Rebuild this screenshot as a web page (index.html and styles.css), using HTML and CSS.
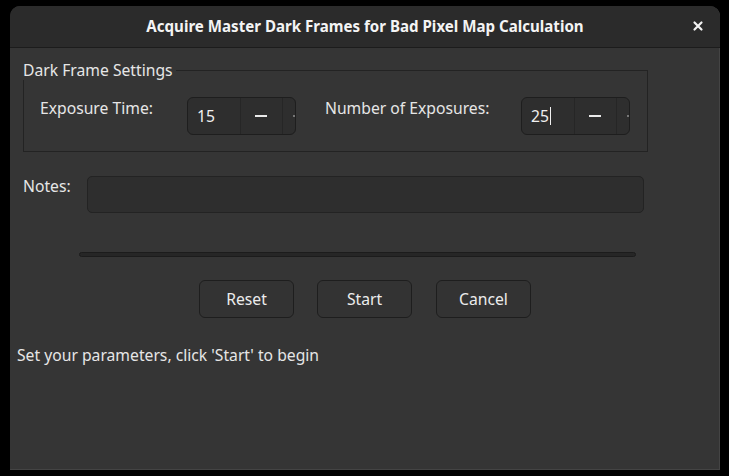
FILE: index.html
```html
<!DOCTYPE html>
<html>
<head>
<meta charset="utf-8">
<link rel="stylesheet" href="styles.css">
</head>
<body>
<div class="window">
  <div class="titlebar">
    <div class="title">Acquire Master Dark Frames for Bad Pixel Map Calculation</div>
    <div class="close">
      <svg width="12" height="12" viewBox="0 0 12 12"><path d="M2.5 2.5 L9.5 9.5 M9.5 2.5 L2.5 9.5" stroke="#f2f2f2" stroke-width="2.2" stroke-linecap="round"/></svg>
    </div>
  </div>
  <div class="content">
    <div class="frame">
      <div class="frame-label">Dark Frame Settings</div>
      <div class="frame-row">
        <div class="lbl lbl1">Exposure Time:</div>
        <div class="spin">
          <div class="spin-entry">15</div>
          <div class="spin-btn"><span class="minus"></span></div>
          <div class="spin-btn cut"><span class="dot"></span></div>
        </div>
        <div class="lbl lbl2">Number of Exposures:</div>
        <div class="spin">
          <div class="spin-entry">25<span class="caret"></span></div>
          <div class="spin-btn"><span class="minus"></span></div>
          <div class="spin-btn cut"><span class="dot"></span></div>
        </div>
      </div>
    </div>
    <div class="notes-row">
      <div class="lbl notes-lbl">Notes:</div>
      <div class="entry"></div>
    </div>
    <div class="progress"></div>
    <div class="buttons">
      <div class="btn">Reset</div>
      <div class="btn">Start</div>
      <div class="btn">Cancel</div>
    </div>
    <div class="status">Set your parameters, click 'Start' to begin</div>
  </div>
</div>
</body>
</html>
```

FILE: styles.css
```css
html, body {
  margin: 0;
  padding: 0;
  background: #000;
  width: 729px;
  height: 476px;
  overflow: hidden;
}
body {
  font-family: "Noto Sans", "Open Sans", sans-serif;
  font-size: 15.7px;
  color: #e6e6e6;
}
.window {
  margin: 6px 0 0 10px;
  width: 710px;
  height: 464px;
  background: #353535;
  border-radius: 10px 10px 0 0;
  box-shadow: inset -1px -1px 0 #444;
  display: flex;
  flex-direction: column;
  overflow: hidden;
}
.titlebar {
  height: 41px;
  flex: none;
  background: #2b2b2b;
  border-bottom: 1px solid #1c1c1c;
  display: flex;
  align-items: center;
  justify-content: center;
  position: relative;
}
.title {
  font-weight: bold;
  font-size: 15.1px;
  color: #f4f4f4;
  margin-top: -1px;
}
.close {
  position: absolute;
  right: 16px;
  top: 14px;
  width: 12px;
  height: 12px;
  display: flex;
}
.content {
  padding: 0 0 0 13px;
  display: flex;
  flex-direction: column;
}
.frame {
  position: relative;
  margin-top: 22px;
  width: 623px;
  height: 80px;
  border: 1px solid #232323;
}
.frame-label {
  position: absolute;
  left: -1px;
  top: -11px;
  line-height: 20px;
  padding-right: 3px;
  background: #353535;
}
.frame-row {
  display: flex;
  align-items: flex-start;
  padding: 26px 0 0 16px;
}
.lbl {
  line-height: 20px;
  padding-top: 1px;
}
.lbl1 { width: 147px; }
.lbl2 { width: 196px; margin-left: 29px; }
.spin {
  width: 107px;
  height: 36px;
  border: 1px solid #1e1e1e;
  border-radius: 6px;
  background: #2e2e2e;
  display: flex;
  overflow: hidden;
}
.spin-entry {
  width: 43px;
  padding-left: 9px;
  display: flex;
  align-items: center;
  color: #f0f0f0;
}
.caret {
  display: inline-block;
  width: 1px;
  height: 18px;
  background: #f0f0f0;
  margin-left: 1px;
}
.spin-btn {
  width: 42px;
  border-left: 1px solid #262626;
  display: flex;
  align-items: center;
  justify-content: center;
}
.spin-btn.cut {
  width: 12px;
  justify-content: flex-end;
}
.minus {
  width: 12px;
  height: 2px;
  background: #eaeaea;
}
.dot {
  width: 2px;
  height: 2px;
  background: #777;
}
.notes-row {
  display: flex;
  align-items: flex-start;
  margin-top: 24px;
}
.notes-lbl {
  width: 64px;
  padding-top: 0;
}
.entry {
  width: 555px;
  height: 35px;
  border: 1px solid #232323;
  border-radius: 5px;
  background: #2e2e2e;
}
.progress {
  margin: 39px 0 0 56px;
  width: 555px;
  height: 3px;
  background: #262626;
  border: 1px solid #1c1c1c;
  border-radius: 3px;
}
.buttons {
  display: flex;
  gap: 23px;
  margin: 23px 0 0 176px;
}
.btn {
  width: 93px;
  height: 35px;
  padding-bottom: 1px;
  border: 1px solid #1e1e1e;
  border-radius: 6px;
  background: #333;
  display: flex;
  align-items: center;
  justify-content: center;
  color: #ececec;
}
.btn:last-child { margin-left: 1px; }
.status {
  margin: 27px 0 0 -6px;
  line-height: 20px;
}
```
